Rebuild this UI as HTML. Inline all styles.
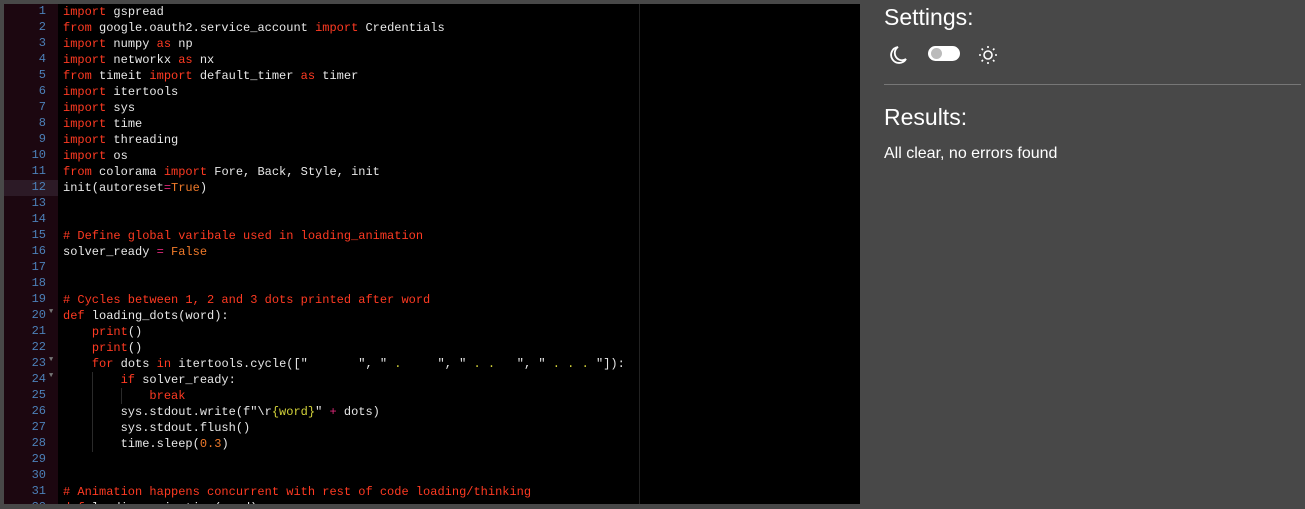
<!DOCTYPE html>
<html><head><style>
body{margin:0;width:1305px;height:509px;background:#484848;position:relative;overflow:hidden;font-family:"Liberation Sans",sans-serif}
#ed{position:absolute;left:4px;top:4px;width:856px;height:500px;background:#000;overflow:hidden}
#gut{position:absolute;left:0;top:0;width:54px;height:500px;background:#1c0710}
.ln{position:absolute;left:0;width:54px;height:16px;line-height:16px;font:12px "Liberation Mono",monospace;color:#4c80b8;text-align:right;box-sizing:border-box;padding-right:12px}
.ln.a{background:#2c1a26}
.fold{position:absolute;left:45px;font-size:7px;color:#777}
#code{position:absolute;left:59px;top:0;font:12px/16px "Liberation Mono",monospace;color:#e8e8e8;white-space:pre}
.k{color:#ff3a22}.c{color:#ff3a22}.o{color:#f07a2a}.s{color:#d4d43a}.p{color:#e0287a}
#pm{position:absolute;left:635px;top:0;width:1px;height:500px;background:#222}
.ig{position:absolute;width:1px;background:#2a2a2a}
.h{position:absolute;left:884px;color:#fff;font-size:23px;font-weight:300}
</style></head><body>
<div id="ed">
<div id="gut"></div>
<div id="pm"></div>
<div class="ig" style="left:88px;top:368px;height:80px"></div>
<div class="ig" style="left:117px;top:384px;height:16px"></div>
<div id="nums"></div>
<div id="code"><span class="k">import</span> gspread
<span class="k">from</span> google.oauth2.service_account <span class="k">import</span> Credentials
<span class="k">import</span> numpy <span class="k">as</span> np
<span class="k">import</span> networkx <span class="k">as</span> nx
<span class="k">from</span> timeit <span class="k">import</span> default_timer <span class="k">as</span> timer
<span class="k">import</span> itertools
<span class="k">import</span> sys
<span class="k">import</span> time
<span class="k">import</span> threading
<span class="k">import</span> os
<span class="k">from</span> colorama <span class="k">import</span> Fore, Back, Style, init
init(autoreset<span class="p">=</span><span class="o">True</span>)


<span class="c"># Define global varibale used in loading_animation</span>
solver_ready <span class="p">=</span> <span class="o">False</span>


<span class="c"># Cycles between 1, 2 and 3 dots printed after word</span>
<span class="k">def</span> loading_dots(word):
    <span class="k">print</span>()
    <span class="k">print</span>()
    <span class="k">for</span> dots <span class="k">in</span> itertools.cycle([<span>"       "</span>, <span>" <span class="s">.</span>     "</span>, <span>" <span class="s">. .</span>   "</span>, <span>" <span class="s">. . .</span> "</span>]):
        <span class="k">if</span> solver_ready:
            <span class="k">break</span>
        sys.stdout.write(f"\r<span class="s">{word}</span>" <span class="p">+</span> dots)
        sys.stdout.flush()
        time.sleep(<span class="o">0.3</span>)


<span class="c"># Animation happens concurrent with rest of code loading/thinking</span>
<span class="k">def</span> loading_animation(word):</div>
</div>
<div class="h" style="top:4px">Settings:</div>
<svg style="position:absolute;left:888px;top:44px" width="20" height="22" viewBox="0 0 20 22"><path d="M10 3a8 8 0 1 0 8 12A7 7 0 0 1 10 3z" fill="none" stroke="#fff" stroke-width="1.8"/></svg>
<div style="position:absolute;left:928px;top:46px;width:32px;height:15px;border-radius:8px;background:#fff"></div>
<div style="position:absolute;left:931px;top:48px;width:11px;height:11px;border-radius:50%;background:#bbb"></div>
<svg style="position:absolute;left:977px;top:44px" width="22" height="22" viewBox="0 0 22 22" stroke="#fff" stroke-width="1.6" fill="none"><circle cx="11" cy="11" r="4"/><path d="M11 2v2M11 18v2M2 11h2M18 11h2M4.6 4.6l1.4 1.4M16 16l1.4 1.4M4.6 17.4L6 16M16 6l1.4-1.4"/></svg>
<div style="position:absolute;left:884px;top:84px;width:417px;height:1px;background:#777"></div>
<div class="h" style="top:104px">Results:</div>
<div style="position:absolute;left:884px;top:145px;color:#fff;font-size:16px">All clear, no errors found</div>
<script>
var g=document.getElementById('nums'),h='';
for(var i=1;i<=32;i++){h+='<div class="ln'+(i==12?' a':'')+'" style="top:'+((i-1)*16)+'px">'+i+([20,23,24].indexOf(i)>=0?'<span class="fold">&#9660;</span>':'')+'</div>';}
g.innerHTML=h;
</script>
</body></html>
